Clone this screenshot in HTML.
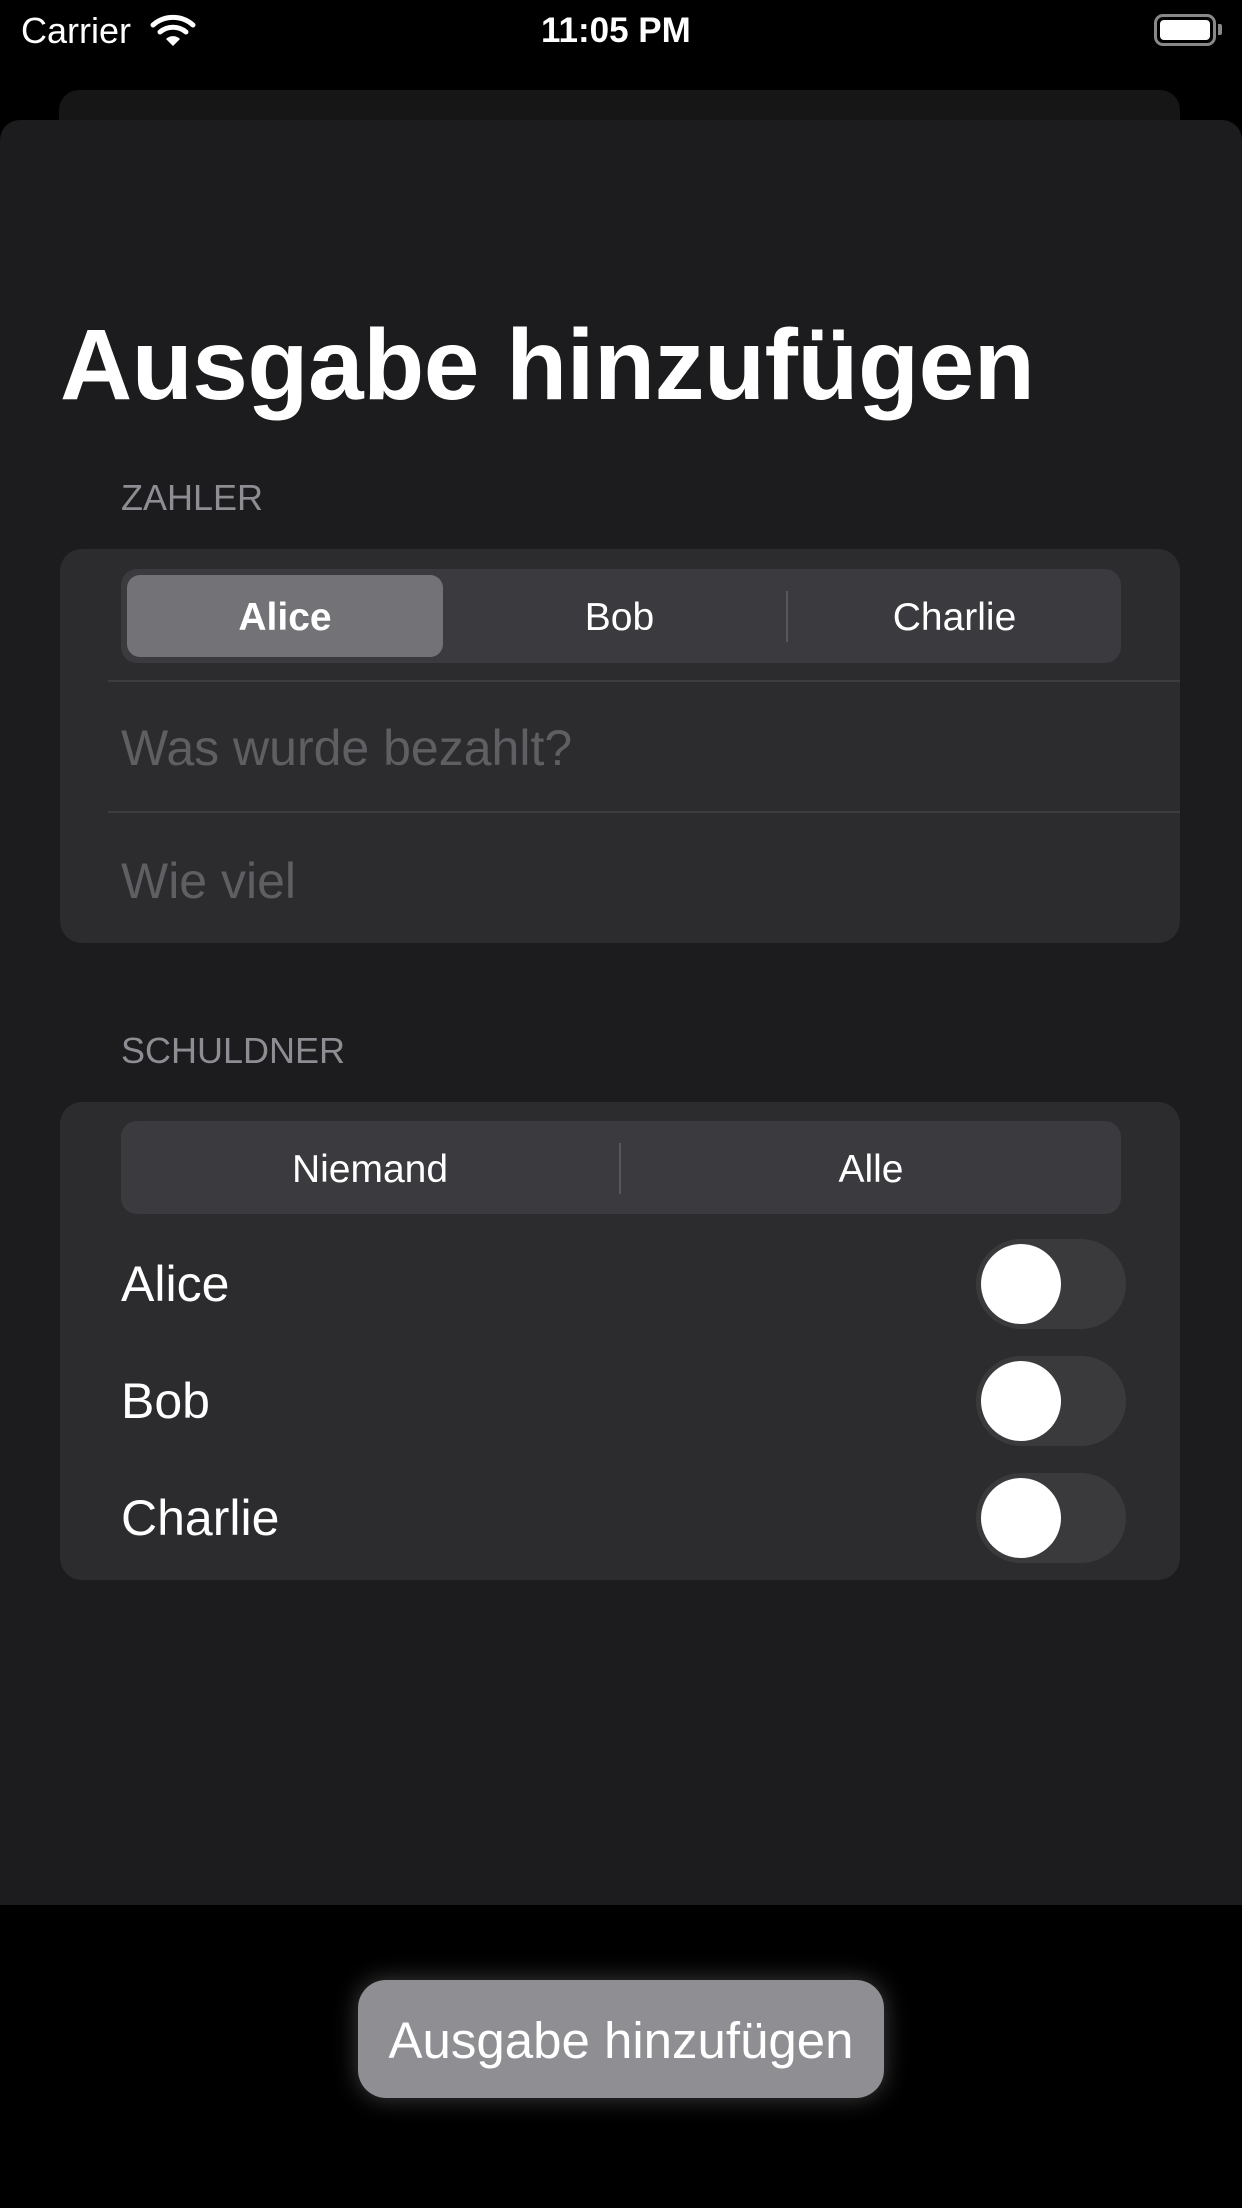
<!DOCTYPE html>
<html><head><meta charset="utf-8"><style>
*{margin:0;padding:0;box-sizing:border-box}
body{width:1242px;height:2208px;background:#000;position:relative;overflow:hidden;font-family:"Liberation Sans",sans-serif;color:#fff}
.a{position:absolute}
.t{position:absolute;white-space:nowrap;line-height:1}
.card{position:absolute;left:60px;width:1120px;background:#2c2c2e;border-radius:22px}
.seg{position:absolute;left:121px;width:1000px;background:#3b3b3f;border-radius:16px}
.tog{position:absolute;left:976px;width:150px;height:90px;border-radius:45px;background:#3a3a3c}
.tog i{position:absolute;left:5px;top:5px;width:80px;height:80px;border-radius:50%;background:#fff}
.row{position:absolute;left:121px;font-size:50px;transform:translateY(-50%)}
</style></head><body>
<div class="t" style="left:21px;top:13px;font-size:36px">Carrier</div>
<svg class="a" style="left:150px;top:13px" width="46" height="34" viewBox="0 0 46 34"><path d="M3 12 A30 30 0 0 1 43 12" stroke="#fff" stroke-width="5" fill="none" stroke-linecap="round"/><path d="M10 19 A20 20 0 0 1 36 19" stroke="#fff" stroke-width="5" fill="none" stroke-linecap="round"/><path d="M16 26 L23 33 L30 26 A10 10 0 0 0 16 26Z" fill="#fff"/></svg>
<div class="t" style="left:541px;top:13px;font-size:35px;font-weight:bold">11:05 PM</div>
<div class="a" style="left:1154px;top:14px;width:62px;height:32px;border:3px solid #888;border-radius:9px"><div class="a" style="left:3px;top:3px;width:50px;height:20px;background:#fff;border-radius:4px"></div></div>
<div class="a" style="left:1218px;top:24px;width:4px;height:11px;background:#888;border-radius:0 2px 2px 0"></div>

<div class="a" style="left:59px;top:90px;width:1121px;height:60px;background:#161616;border-radius:20px 20px 0 0"></div>
<div class="a" style="left:0;top:120px;width:1242px;height:1785px;background:#1c1c1e;border-radius:20px 20px 0 0"></div>

<div class="t" style="left:60px;top:315px;font-size:100px;font-weight:bold;letter-spacing:-0.5px">Ausgabe hinzufügen</div>
<div class="t" style="left:121px;top:480px;font-size:36px;color:#8d8d93">ZAHLER</div>

<div class="card" style="top:549px;height:394px"></div>
<div class="seg" style="top:569px;height:94px"></div>
<div class="a" style="left:127px;top:575px;width:316px;height:82px;background:#737277;border-radius:13px"></div>
<div class="a" style="left:786px;top:591px;width:2px;height:51px;background:#58585c"></div>
<div class="t" style="left:127px;width:316px;text-align:center;top:598px;font-size:39px;font-weight:bold">Alice</div>
<div class="t" style="left:453px;width:333px;text-align:center;top:598px;font-size:39px">Bob</div>
<div class="t" style="left:788px;width:333px;text-align:center;top:598px;font-size:39px">Charlie</div>
<div class="a" style="left:108px;top:680px;width:1072px;height:2px;background:#3d3d40"></div>
<div class="t" style="left:121px;top:723px;font-size:50px;color:#5f5f63">Was wurde bezahlt?</div>
<div class="a" style="left:108px;top:811px;width:1072px;height:2px;background:#3d3d40"></div>
<div class="t" style="left:121px;top:856px;font-size:50px;color:#5f5f63">Wie viel</div>

<div class="t" style="left:121px;top:1033px;font-size:36px;color:#8d8d93">SCHULDNER</div>
<div class="card" style="top:1102px;height:478px"></div>
<div class="seg" style="top:1121px;height:93px"></div>
<div class="a" style="left:619px;top:1143px;width:2px;height:51px;background:#58585c"></div>
<div class="t" style="left:121px;width:498px;text-align:center;top:1150px;font-size:39px">Niemand</div>
<div class="t" style="left:621px;width:500px;text-align:center;top:1150px;font-size:39px">Alle</div>

<div class="row" style="top:1284px">Alice</div>
<div class="tog" style="top:1239px"><i></i></div>
<div class="row" style="top:1401px">Bob</div>
<div class="tog" style="top:1356px"><i></i></div>
<div class="row" style="top:1518px">Charlie</div>
<div class="tog" style="top:1473px"><i></i></div>

<div class="a" style="left:358px;top:1980px;width:526px;height:118px;background:#8e8e93;border-radius:28px;box-shadow:0 0 24px rgba(255,255,255,0.25)"></div>
<div class="t" style="left:358px;width:526px;text-align:center;top:2015px;font-size:51px">Ausgabe hinzufügen</div>
</body></html>
